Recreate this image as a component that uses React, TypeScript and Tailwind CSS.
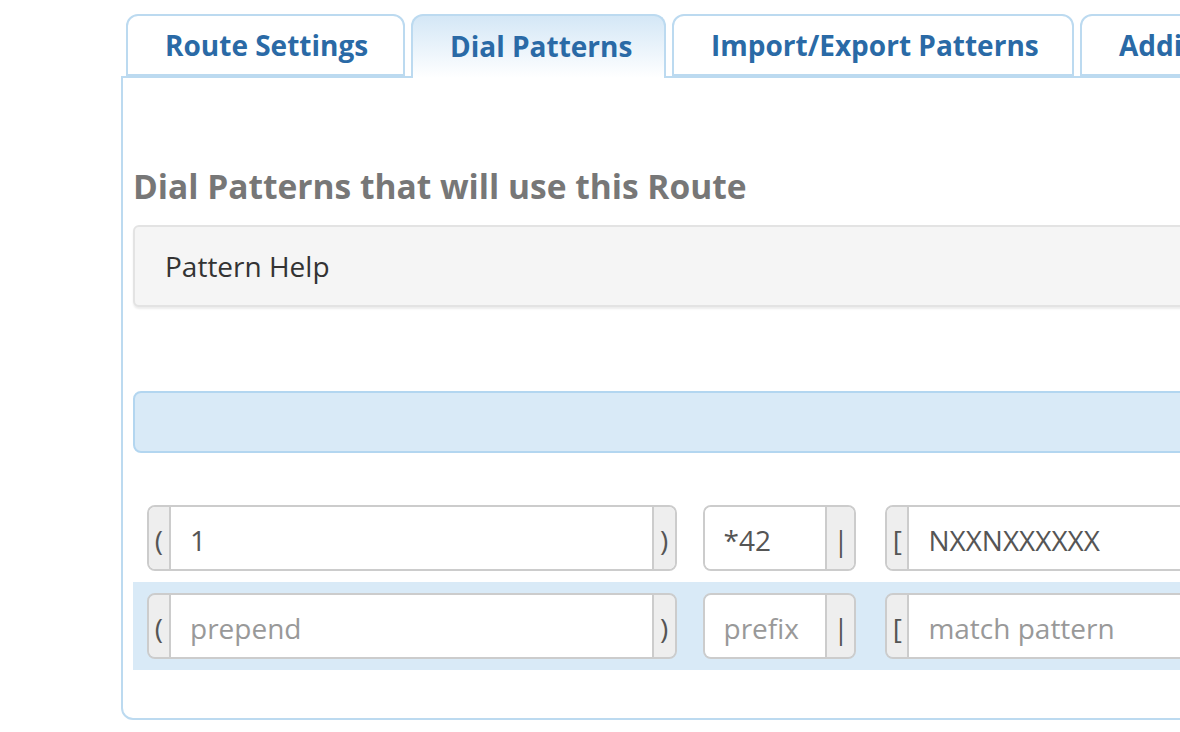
const font = { fontFamily: '"Open Sans", "Liberation Sans", sans-serif' };

function Tab({ label, active, width }: { label: string; active?: boolean; width: string }) {
	return (
		<div
			className={`flex h-[62px] shrink-0 items-center whitespace-nowrap rounded-t-[12px] border-2 border-[#bcdaf0] px-[37px] ${width} ${
				active
					? "-mb-[2px] h-[64px] border-b-0 bg-gradient-to-b from-[#d4e7f6] to-white pb-[2px]"
					: "bg-white"
			}`}
		>
			<span className="text-[28px] font-bold leading-none text-[#2a6aa6]">{label}</span>
		</div>
	);
}

function Addon({ children, width }: { children: string; width: string }) {
	return (
		<div
			className={`flex shrink-0 items-center justify-center bg-[#eeeeee] pt-[3px] text-[28px] text-[#555] ${width}`}
		>
			{children}
		</div>
	);
}

function Field({ value, placeholder }: { value?: string; placeholder: string }) {
	return (
		<div className="flex min-w-0 flex-1 items-center whitespace-nowrap bg-white pl-[19px] pt-[3px] text-[28px]">
			{value ? (
				<span className="text-[#555]">{value}</span>
			) : (
				<span className="text-[#999]">{placeholder}</span>
			)}
		</div>
	);
}

function PatternRow({
	prepend,
	prefix,
	match,
}: {
	prepend?: string;
	prefix?: string;
	match?: string;
}) {
	return (
		<div className="flex h-[66px] items-stretch">
			<div className="flex w-[530px] overflow-hidden rounded-[8px] border-2 border-[#cccccc]">
				<Addon width="w-[22px] border-r-2 border-[#cccccc]">(</Addon>
				<Field placeholder="prepend" value={prepend} />
				<Addon width="w-[23px] border-l-2 border-[#cccccc]">)</Addon>
			</div>
			<div className="ml-[26px] flex w-[154px] overflow-hidden rounded-[8px] border-2 border-[#cccccc]">
				<Field placeholder="prefix" value={prefix} />
				<Addon width="w-[29px] border-l-2 border-[#cccccc]">|</Addon>
			</div>
			<div className="ml-[29px] flex w-[420px] overflow-hidden rounded-[8px] border-2 border-[#cccccc]">
				<Addon width="w-[22px] border-r-2 border-[#cccccc]">[</Addon>
				<Field placeholder="match pattern" value={match} />
			</div>
		</div>
	);
}

export default function App() {
	return (
		<div className="h-[732px] w-[1180px] overflow-hidden bg-white pl-[121px] pt-[14px]" style={font}>
			<div className="relative z-10 ml-[5px] flex items-end gap-[6px]">
				<Tab label="Route Settings" width="w-[279px]" />
				<Tab active label="Dial Patterns" width="w-[255px]" />
				<Tab label="Import/Export Patterns" width="w-[402px]" />
				<Tab label="Additional Settings" width="w-[340px]" />
			</div>
			<div className="h-[644px] w-[1200px] rounded-bl-[12px] border-2 border-[#bcdaf0] pl-[10px] pt-[88px]">
				<h2 className="text-[33.5px] font-bold leading-[40px] text-[#777777]">
					Dial Patterns that will use this Route
				</h2>
				<div className="mt-[19px] flex h-[82px] items-center rounded-[6px] border-2 border-[#e3e3e3] bg-[#f5f5f5] pl-[30px] shadow-[0_2px_2px_rgba(0,0,0,0.08)]">
					<span className="text-[28px] text-[#333333]">Pattern Help</span>
				</div>
				<div className="mt-[84px] h-[62px] rounded-[8px] border-2 border-[#b3d6f0] bg-[#d9eaf7]" />
				<div className="mt-[52px] px-[14px]">
					<PatternRow match="NXXNXXXXXX" prefix="*42" prepend="1" />
				</div>
				<div className="mt-[11px] bg-[#d9eaf7] px-[14px] py-[11px]">
					<PatternRow />
				</div>
			</div>
		</div>
	);
}
